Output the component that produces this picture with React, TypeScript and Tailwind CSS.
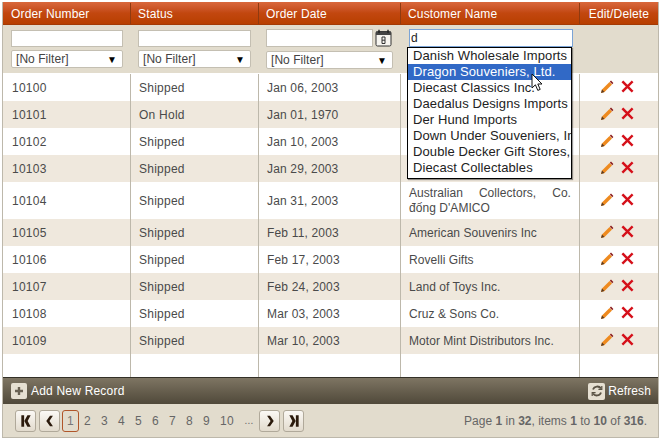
import React from "react";

const rows = [
  ["10100", "Shipped", "Jan 06, 2003", "", 28],
  ["10101", "On Hold", "Jan 01, 1970", "", 27],
  ["10102", "Shipped", "Jan 10, 2003", "", 27],
  ["10103", "Shipped", "Jan 29, 2003", "", 27],
  ["10104", "Shipped", "Jan 31, 2003", "AUS", 37],
  ["10105", "Shipped", "Feb 11, 2003", "American Souvenirs Inc", 27],
  ["10106", "Shipped", "Feb 17, 2003", "Rovelli Gifts", 27],
  ["10107", "Shipped", "Feb 24, 2003", "Land of Toys Inc.", 27],
  ["10108", "Shipped", "Mar 03, 2003", "Cruz & Sons Co.", 27],
  ["10109", "Shipped", "Mar 10, 2003", "Motor Mint Distributors Inc.", 27],
] as const;

const options = [
  "Danish Wholesale Imports",
  "Dragon Souveniers, Ltd.",
  "Diecast Classics Inc.",
  "Daedalus Designs Imports",
  "Der Hund Imports",
  "Down Under Souveniers, Inc.",
  "Double Decker Gift Stores, Ltd",
  "Diecast Collectables",
];

const colClasses = ["w-[128px]", "w-[128px]", "w-[142px]", "w-[179px]", "flex-1"];

function Pencil() {
  return (
    <svg width="14" height="14" viewBox="0 0 14 14">
      <path d="M1 13 L2 9.5 L9.5 2 L12 4.5 L4.5 12 Z" fill="#ee8a1f" />
      <path d="M1 13 L2 9.5 L4.5 12 Z" fill="#5a3a20" />
      <path d="M9.8 1.7 L11 .6 L13.4 3 L12.3 4.2 Z" fill="#8c1f1f" />
    </svg>
  );
}

function Cross() {
  return (
    <svg width="13" height="13" viewBox="0 0 13 13">
      <path d="M2.2 2.2 L10.8 10.8 M10.8 2.2 L2.2 10.8" stroke="#d5101a" strokeWidth="2.4" strokeLinecap="square" />
    </svg>
  );
}

function FilterSelect() {
  return (
    <div className="h-[18px] bg-white border border-[#c4bfb2] rounded-[2px] flex items-center justify-between pl-1 pr-[5px] text-[12px] text-[#444] tracking-[0.05px]">
      <span>[No Filter]</span>
      <span className="text-[10px] text-black">▼</span>
    </div>
  );
}

function PageBtn({ children }: { children: React.ReactNode }) {
  return (
    <div className="w-[21px] h-[22px] border border-[#b0a99a] rounded-[3px] bg-gradient-to-b from-[#fbf9f5] to-[#e2dbcd] flex items-center justify-center">
      {children}
    </div>
  );
}

function Arrow({ d }: { d: string }) {
  return (
    <svg width="14" height="14" viewBox="0 0 12 12">
      <path d={d} fill="#2b1a0c" />
    </svg>
  );
}

export default function App() {
  return (
    <div className="w-[660px] h-[439px] bg-white pl-[2px] pt-[2px] font-['Liberation_Sans',Arial,sans-serif] tracking-[0.25px]">
      <div className="relative w-[657px] h-[436px] border-l border-r border-b border-[#bdb8ab] flex flex-col">
        {/* Header */}
        <div className="flex h-[23px] shrink-0 text-white text-[12px] tracking-[0.15px] pt-[1px] bg-gradient-to-b from-[#d9683c] via-[#c2470f] via-50% to-[#b83f00] border-b border-[#a33a05]">
          {["Order Number", "Status", "Order Date", "Customer Name"].map((t, i) => (
            <div key={t} className={`${colClasses[i]} shrink-0 border-r border-[#8f3a10] ${i === 0 ? "pl-[8px]" : "pl-[7px]"} flex items-center`}>
              {t}
            </div>
          ))}
          <div className="flex-1 flex items-center justify-center">Edit/Delete</div>
        </div>

        {/* Filters */}
        <div className="flex h-[48px] shrink-0 bg-[#e2dccd]">
          <div className={`${colClasses[0]} shrink-0 pl-[8px] pr-[8px] pt-[5px] flex flex-col gap-[3px]`}>
            <div className="h-[17px] bg-white border border-[#c4bfb2]" />
            <FilterSelect />
          </div>
          <div className={`${colClasses[1]} shrink-0 pl-[7px] pr-[8px] pt-[5px] flex flex-col gap-[3px]`}>
            <div className="h-[17px] bg-white border border-[#c4bfb2]" />
            <FilterSelect />
          </div>
          <div className={`${colClasses[2]} shrink-0 pl-[7px] pr-[8px] pt-[4px] flex flex-col gap-[4px]`}>
            <div className="flex items-center gap-[2px]">
              <div className="w-[107px] h-[18px] bg-white border border-[#c4bfb2]" />
              <svg width="17" height="18" viewBox="0 0 17 18">
                <rect x="1" y="2.5" width="15" height="14.5" rx="1.5" fill="#f7f5f0" stroke="#333" />
                <rect x="1" y="2.5" width="15" height="3.5" fill="#444" />
                <path d="M4 .8V4 M13 .8V4" stroke="#222" strokeWidth="1.4" />
                <path d="M7 8h3v6.5h-3z M7 11.2h3" fill="none" stroke="#333" />
              </svg>
            </div>
            <FilterSelect />
          </div>
          <div className={`${colClasses[3]} shrink-0 pl-[8px] pr-[7px] pt-[4px]`}>
            <div className="h-[18px] bg-white border border-[#7ba4d6] pl-[1px] text-[12px] leading-[16px] text-[#222]">d</div>
          </div>
          <div className="flex-1" />
        </div>

        {/* Rows */}
        <div className="flex-1 flex flex-col min-h-0">
          {rows.map((r, idx) => (
            <div
              key={r[0]}
              style={{ height: r[4] }}
              className={`flex shrink-0 text-[12px] text-[#4a4a4a] ${idx % 2 ? "bg-[#efe8dd]" : "bg-white"} ${idx === 0 ? "pt-[1px]" : ""}`}
            >
              <div className={`${colClasses[0]} shrink-0 border-r border-[#bdb8ab] pl-[9px] flex items-center`}>{r[0]}</div>
              <div className={`${colClasses[1]} shrink-0 border-r border-[#bdb8ab] pl-[8px] flex items-center`}>{r[1]}</div>
              <div className={`${colClasses[2]} shrink-0 border-r border-[#bdb8ab] pl-[8px] tracking-[0.17px] flex items-center`}>{r[2]}</div>
              <div className={`${colClasses[3]} shrink-0 border-r border-[#bdb8ab] pl-[8px] pr-[8px] tracking-[0.05px] flex items-center`}>
                {r[3] === "AUS" ? (
                  <div className="w-full leading-[15px]">
                    <div className="flex justify-between"><span>Australian</span><span>Collectors,</span><span>Co.</span></div>
                    <div>đống D'AMICO</div>
                  </div>
                ) : (
                  r[3]
                )}
              </div>
              <div className="flex-1 flex items-center gap-[7px] pl-[20px] pb-[2px]">
                <Pencil />
                <Cross />
              </div>
            </div>
          ))}
          <div className="flex flex-1 min-h-0">
            <div className={`${colClasses[0]} shrink-0 border-r border-[#bdb8ab]`} />
            <div className={`${colClasses[1]} shrink-0 border-r border-[#bdb8ab]`} />
            <div className={`${colClasses[2]} shrink-0 border-r border-[#bdb8ab]`} />
            <div className={`${colClasses[3]} shrink-0 border-r border-[#bdb8ab]`} />
          </div>
        </div>

        {/* Toolbar */}
        <div className="h-[27px] shrink-0 border-t border-[#333027] bg-gradient-to-b from-[#7e7563] to-[#50493a] flex items-center justify-between pl-[8px] pr-[7px] text-white text-[12px] tracking-[0.2px]">
          <div className="flex items-center gap-[4px]">
            <div className="w-[16px] h-[16px] rounded-[2px] bg-[#e6e0d2] flex items-center justify-center">
              <svg width="10" height="10" viewBox="0 0 10 10"><path d="M5 1v8M1 5h8" stroke="#6a6253" strokeWidth="2.4" /></svg>
            </div>
            <span>Add New Record</span>
          </div>
          <div className="flex items-center gap-[3px] tracking-[0.1px]">
            <div className="w-[17px] h-[17px] rounded-[2px] bg-[#e6e0d2] flex items-center justify-center">
              <svg width="12" height="12" viewBox="0 0 12 12" fill="none" stroke="#5a5345" strokeWidth="1.8">
                <path d="M10 3.5A4.5 4.5 0 0 0 2 4.5" />
                <path d="M2 8.5A4.5 4.5 0 0 0 10 7.5" />
                <path d="M10.8 1v3.4H7.4M1.2 11V7.6h3.4" strokeWidth="1.2" />
              </svg>
            </div>
            <span>Refresh</span>
          </div>
        </div>

        {/* Pager */}
        <div className="h-[33px] shrink-0 bg-[#e2dccd] flex items-center justify-between pl-[12px] pr-[11px] text-[12px] text-[#666]">
          <div className="flex items-center">
            <PageBtn><Arrow d="M2 1h2.4v10H2zM10 1H7.2L4.6 6l2.6 5H10L7.4 6z" /></PageBtn>
            <div className="w-[3px]" />
            <PageBtn><Arrow d="M8.5 1.5H6L2.8 6 6 10.5h2.5L5.5 6z" /></PageBtn>
            <div className="ml-[2px] w-[17px] h-[22px] border border-[#b0562a] rounded-[3px] flex items-center justify-center text-[#777]">1</div>
            <div className="flex items-center text-center">
              {["2", "3", "4", "5", "6", "7", "8", "9"].map((n) => <span key={n} className="w-[17px]">{n}</span>)}
              <span className="w-[24px]">10</span>
              <span className="w-[20px] text-[10px]">...</span>
            </div>
            <PageBtn><Arrow d="M3.5 1.5H6L9.2 6 6 10.5H3.5L6.5 6z" /></PageBtn>
            <div className="w-[3px]" />
            <PageBtn><Arrow d="M10 1H7.6v10H10zM2 1h2.8l2.6 5-2.6 5H2l2.6-5z" /></PageBtn>
          </div>
          <div className="tracking-normal">
            Page <b>1</b> in <b>32</b>, items <b>1</b> to <b>10</b> of <b>316</b>.
          </div>
        </div>

        {/* Dropdown overlay */}
        <div className="absolute left-[404px] top-[45px] w-[165px] h-[132px] bg-white border border-black shadow-[1px_1px_1px_rgba(0,0,0,0.4)] overflow-hidden text-[13px] leading-[16px] text-[#222] tracking-[0.1px]">
          {options.map((o, i) => (
            <div key={o} className={`pl-[5px] whitespace-nowrap h-[16px] ${i === 1 ? "bg-[#3169c6] text-white" : ""}`}>
              {o}
            </div>
          ))}
        </div>

        {/* Cursor */}
        <svg className="absolute left-[528px] top-[71px]" width="13" height="19" viewBox="0 0 13 19">
          <path d="M1 1v14l3.4-3.2 2.4 5.6 2.4-1-2.4-5.4H11z" fill="#fff" stroke="#111" strokeWidth="1" />
        </svg>
      </div>
    </div>
  );
}
